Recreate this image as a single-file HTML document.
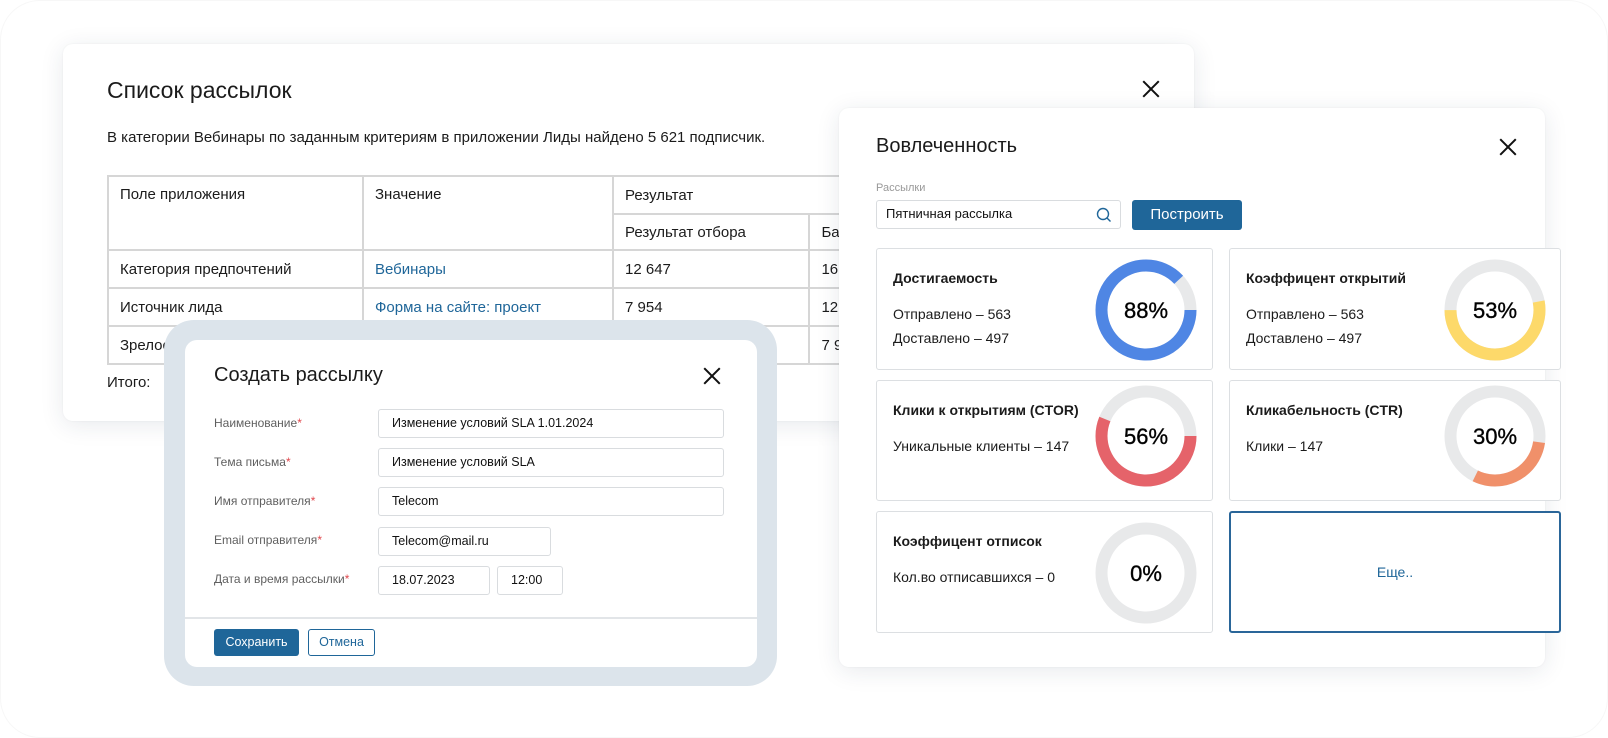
<!DOCTYPE html>
<html><head><meta charset="utf-8">
<style>
*{margin:0;padding:0;box-sizing:border-box}
body{width:1608px;height:738px;background:#fff;position:relative;overflow:hidden;font-family:"Liberation Sans","Noto Sans CJK SC",sans-serif;color:#1b1b1b}
.abs{position:absolute}
.panel{position:absolute;background:#fff;border-radius:10px;box-shadow:0 4px 24px rgba(30,50,80,.10),0 0 2px rgba(0,0,0,.05)}
.x{position:absolute;width:18px;height:18px}
.x:before,.x:after{content:"";position:absolute;left:-2px;top:8px;width:22px;height:2px;background:#111;transform:rotate(45deg)}
.x:after{transform:rotate(-45deg)}
table{border-collapse:collapse;position:absolute;left:107px;top:175px;font-size:15px}
td{border:2px solid #d6d6d6;padding:0 11px;vertical-align:middle}
.lnk{color:#1f6699}
.lbl{position:absolute;left:214px;font-size:12px;color:#5f5f5f}
.lbl b{color:#e0474c;font-weight:normal}
.inp{position:absolute;height:29px;border:1.5px solid #d9dcdf;border-radius:3px;font-size:12.5px;padding-left:13px;line-height:26px;color:#111}
.card{position:absolute;background:#fff;border:1px solid #dcdfe2;border-radius:3px}
.card h4{position:absolute;left:16px;top:21px;font-size:14px;font-weight:bold}
.card p{position:absolute;left:16px;font-size:14px}
.card svg{position:absolute}
.pct{font-family:"Liberation Sans",sans-serif;font-size:22px;stroke:#111;stroke-width:0.4}
</style></head><body>
<div class="abs" style="left:0;top:0;width:1608px;height:738px;border-radius:40px;border:1px solid #f7f7f7"></div>

<!-- Panel 1 -->
<div class="panel" style="left:63px;top:44px;width:1131px;height:377px"></div>
<div class="abs" style="left:107px;top:77px;font-size:23px">Список рассылок</div>
<div class="x" style="left:1142px;top:80px"></div>
<div class="abs" style="left:107px;top:129px;font-size:15px">В категории Вебинары по заданным критериям в приложении Лиды найдено 5 621 подписчик.</div>
<table>
<tr style="height:38px"><td rowspan="2" style="width:255px;vertical-align:top;padding-top:9px">Поле приложения</td><td rowspan="2" style="width:250px;vertical-align:top;padding-top:9px">Значение</td><td colspan="2" style="width:400px">Результат</td></tr>
<tr style="height:36px"><td style="width:193px">Результат отбора</td><td style="width:200px">Ба</td></tr>
<tr style="height:38px"><td>Категория предпочтений</td><td class="lnk">Вебинары</td><td>12 647</td><td>16</td></tr>
<tr style="height:38px"><td>Источник лида</td><td class="lnk">Форма на сайте: проект</td><td>7 954</td><td>12</td></tr>
<tr style="height:38px"><td>Зрелость</td><td></td><td></td><td>7 9</td></tr>
</table>
<div class="abs" style="left:107px;top:374px;font-size:15px">Итого:</div>

<!-- Panel 3 -->
<div class="abs" style="left:164px;top:320px;width:613px;height:366px;background:#dce4eb;border-radius:30px"></div>
<div class="abs" style="left:185px;top:340px;width:572px;height:327px;background:#fff;border-radius:12px"></div>
<div class="abs" style="left:214px;top:364px;font-size:20px">Создать рассылку</div>
<div class="x" style="left:703px;top:367px"></div>
<div class="lbl" style="top:416px">Наименование<b>*</b></div>
<div class="lbl" style="top:455px">Тема письма<b>*</b></div>
<div class="lbl" style="top:494px">Имя отправителя<b>*</b></div>
<div class="lbl" style="top:533px">Email отправителя<b>*</b></div>
<div class="lbl" style="top:572px">Дата и время рассылки<b>*</b></div>
<div class="inp" style="left:378px;top:409px;width:346px">Изменение условий SLA 1.01.2024</div>
<div class="inp" style="left:378px;top:448px;width:346px">Изменение условий SLA</div>
<div class="inp" style="left:378px;top:487px;width:346px">Telecom</div>
<div class="inp" style="left:378px;top:527px;width:173px">Telecom@mail.ru</div>
<div class="inp" style="left:378px;top:566px;width:112px">18.07.2023</div>
<div class="inp" style="left:497px;top:566px;width:66px">12:00</div>
<div class="abs" style="left:185px;top:617px;width:572px;height:2px;background:#e2e5e8"></div>
<div class="abs" style="left:214px;top:629px;width:85px;height:27px;background:#1f6699;border-radius:3px;color:#fff;font-size:12.5px;text-align:center;line-height:27px">Сохранить</div>
<div class="abs" style="left:308px;top:629px;width:67px;height:27px;border:1px solid #1f6699;border-radius:3px;color:#1f6699;font-size:12.5px;text-align:center;line-height:25px">Отмена</div>

<!-- Panel 2 -->
<div class="panel" style="left:839px;top:108px;width:706px;height:559px"></div>
<div class="abs" style="left:876px;top:135px;font-size:20px">Вовлеченность</div>
<div class="x" style="left:1499px;top:138px"></div>
<div class="abs" style="left:876px;top:182px;font-size:11px;color:#999">Рассылки</div>
<div class="inp" style="left:876px;top:200px;width:245px;font-size:13px;padding-left:9px">Пятничная рассылка
<svg style="position:absolute;right:8px;top:6px" width="16" height="16" viewBox="0 0 16 16"><circle cx="7" cy="7" r="5.5" fill="none" stroke="#1f6699" stroke-width="1.4"/><path d="M11 11L14.5 14.5" stroke="#1f6699" stroke-width="1.4"/></svg></div>
<div class="abs" style="left:1132px;top:200px;width:110px;height:30px;background:#1f6699;border-radius:3px;color:#fff;font-size:15px;text-align:center;line-height:30px">Построить</div>

<!-- cards -->
<div class="card" style="left:876px;top:248px;width:337px;height:122px">
<h4>Достигаемость</h4><p style="top:57px">Отправлено – 563</p><p style="top:81px">Доставлено – 497</p>
<svg style="left:218px;top:10px" width="102" height="102" viewBox="0 0 102 102"><circle cx="51" cy="51" r="44.5" fill="none" stroke="#e8e9ea" stroke-width="12"/><circle cx="51" cy="51" r="44.5" fill="none" stroke="#4f86e4" stroke-width="12" stroke-dasharray="246 400" transform="rotate(0 51 51)"/><text x="51" y="59" text-anchor="middle" class="pct">88%</text></svg>
</div>
<div class="card" style="left:1229px;top:248px;width:332px;height:122px">
<h4>Коэффицент открытий</h4><p style="top:57px">Отправлено – 563</p><p style="top:81px">Доставлено – 497</p>
<svg style="left:214px;top:10px" width="102" height="102" viewBox="0 0 102 102"><circle cx="51" cy="51" r="44.5" fill="none" stroke="#e8e9ea" stroke-width="12"/><circle cx="51" cy="51" r="44.5" fill="none" stroke="#fdd96a" stroke-width="12" stroke-dasharray="148 400" transform="rotate(-11 51 51)"/><text x="51" y="59" text-anchor="middle" class="pct">53%</text></svg>
</div>
<div class="card" style="left:876px;top:380px;width:337px;height:121px">
<h4>Клики к открытиям (CTOR)</h4><p style="top:57px">Уникальные клиенты – 147</p>
<svg style="left:218px;top:4px" width="102" height="102" viewBox="0 0 102 102"><circle cx="51" cy="51" r="44.5" fill="none" stroke="#e8e9ea" stroke-width="12"/><circle cx="51" cy="51" r="44.5" fill="none" stroke="#e5636a" stroke-width="12" stroke-dasharray="157 400"/><text x="51" y="59" text-anchor="middle" class="pct">56%</text></svg>
</div>
<div class="card" style="left:1229px;top:380px;width:332px;height:121px">
<h4>Кликабельность (CTR)</h4><p style="top:57px">Клики – 147</p>
<svg style="left:214px;top:4px" width="102" height="102" viewBox="0 0 102 102"><circle cx="51" cy="51" r="44.5" fill="none" stroke="#e8e9ea" stroke-width="12"/><circle cx="51" cy="51" r="44.5" fill="none" stroke="#f0906a" stroke-width="12" stroke-dasharray="84 400" transform="rotate(8 51 51)"/><text x="51" y="59" text-anchor="middle" class="pct">30%</text></svg>
</div>
<div class="card" style="left:876px;top:511px;width:337px;height:122px">
<h4>Коэффицент отписок</h4><p style="top:57px">Кол.во отписавшихся – 0</p>
<svg style="left:218px;top:10px" width="102" height="102" viewBox="0 0 102 102"><circle cx="51" cy="51" r="44.5" fill="none" stroke="#e8e9ea" stroke-width="12"/><text x="51" y="59" text-anchor="middle" class="pct">0%</text></svg>
</div>
<div class="abs" style="left:1229px;top:511px;width:332px;height:122px;border:2px solid #2a6699;border-radius:3px;background:#fff;color:#1f6699;font-size:14px;text-align:center;line-height:118px">Еще..</div>
</body></html>
